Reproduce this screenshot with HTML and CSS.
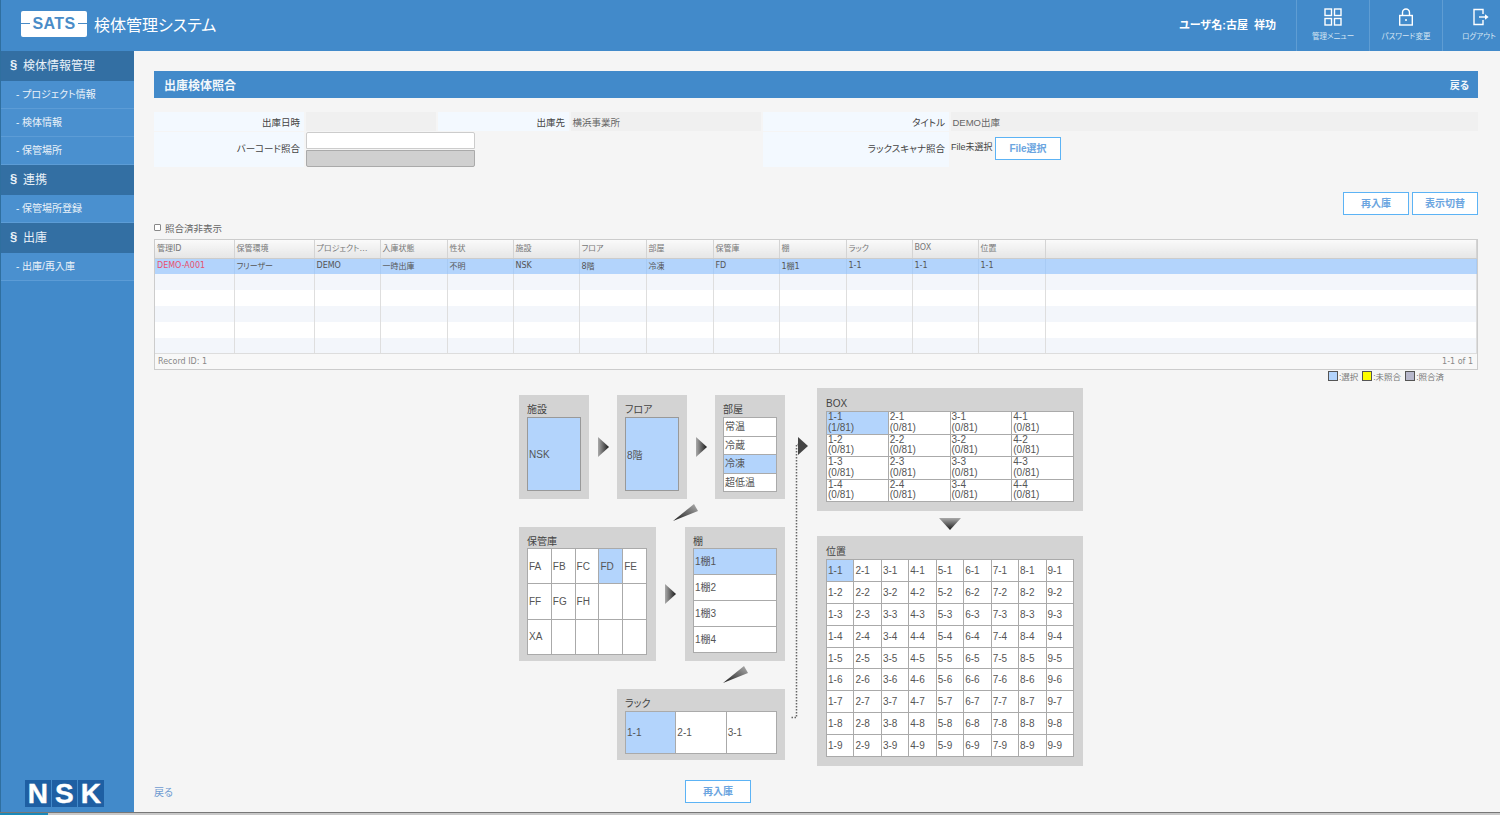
FILE: index.html
```html
<!DOCTYPE html>
<html lang="ja">
<head>
    <meta charset="UTF-8">
    <title>検体管理システム</title>
    <link rel="stylesheet" href="styles.css">
</head>
<body>
<header class="header">
    <div class="logo"><span class="logo-dash"></span><span class="logo-text">SATS</span><span class="logo-dash"></span></div>
    <div class="app-title">検体管理システム</div>
    <div class="user-name">ユーザ名:古屋&nbsp;&nbsp;祥功</div>
    <nav class="tools">
        <a class="tool">
            <svg width="18" height="18" viewBox="0 0 18 18" fill="none" stroke="#fff" stroke-width="1.4"><rect x="1" y="1" width="6.5" height="6.5"/><rect x="10.5" y="1" width="6.5" height="6.5"/><rect x="1" y="10.5" width="6.5" height="6.5"/><rect x="10.5" y="10.5" width="6.5" height="6.5"/></svg>
            <span>管理メニュー</span>
        </a>
        <a class="tool">
            <svg width="18" height="18" viewBox="0 0 18 18" fill="none" stroke="#fff" stroke-width="1.4"><rect x="2.7" y="7.5" width="12.6" height="9.5"/><path d="M5.5 7.5V4.5a3.5 3.5 0 0 1 7 0v3"/><circle cx="9" cy="12" r="1" fill="#fff" stroke="none"/></svg>
            <span>パスワード変更</span>
        </a>
        <a class="tool">
            <svg class="logout-icon" width="18" height="18" viewBox="0 0 18 18" fill="none" stroke="#fff" stroke-width="1.4"><path d="M11 6V1.5H2V16.5H11V12"/><path d="M7 9H13"/><path d="M13 6.2L16.6 9L13 11.8Z" fill="#fff" stroke="none"/></svg>
            <span>ログアウト</span>
        </a>
    </nav>
</header>

<div class="layout">
    <aside class="sidebar">
        <div class="side-head"><b>§</b>検体情報管理</div>
        <a class="side-item">- プロジェクト情報</a>
        <a class="side-item">- 検体情報</a>
        <a class="side-item">- 保管場所</a>
        <div class="side-head"><b>§</b>連携</div>
        <a class="side-item">- 保管場所登録</a>
        <div class="side-head"><b>§</b>出庫</div>
        <a class="side-item">- 出庫/再入庫</a>
        <div class="nsk"><span>N</span><span>S</span><span>K</span></div>
    </aside>

    <main class="main">
        <div class="title-bar"><span>出庫検体照合</span><a>戻る</a></div>

        <div class="info-form">
            <div class="f-label">出庫日時</div>
            <div class="f-value"></div>
            <div class="f-label">出庫先</div>
            <div class="f-value">横浜事業所</div>
            <div class="f-label">タイトル</div>
            <div class="f-value">DEMO出庫</div>

            <div class="f-label f-label-tall">バーコード照合</div>
            <div class="barcode">
                <div class="barcode-input"></div>
                <div class="barcode-btn"></div>
            </div>
            <div class="f-label f-label-tall">ラックスキャナ照合</div>
            <div class="f-file">File未選択<button class="btn btn-file">File選択</button></div>
        </div>

        <div class="actions">
            <button class="btn">再入庫</button>
            <button class="btn">表示切替</button>
        </div>

        <label class="hide-check"><span class="check-box"></span>照合済非表示</label>

        <div class="grid-wrap">
            <table class="data-grid">
                <colgroup>
                    <col class="c79"><col class="c80"><col class="c66"><col class="c67"><col class="c66"><col class="c66"><col class="c67"><col class="c67"><col class="c66"><col class="c67"><col class="c66"><col class="c66"><col class="c67"><col>
                </colgroup>
                <thead>
                    <tr><th>管理ID</th><th>保管環境</th><th>プロジェクト…</th><th>入庫状態</th><th>性状</th><th>施設</th><th>フロア</th><th>部屋</th><th>保管庫</th><th>棚</th><th>ラック</th><th>BOX</th><th>位置</th><th></th></tr>
                </thead>
                <tbody>
                    <tr class="row-selected"><td class="id-cell">DEMO-A001</td><td>フリーザー</td><td>DEMO</td><td>一時出庫</td><td>不明</td><td>NSK</td><td>8階</td><td>冷凍</td><td>FD</td><td>1棚1</td><td>1-1</td><td>1-1</td><td>1-1</td><td></td></tr>
                    <tr class="row-alt"><td></td><td></td><td></td><td></td><td></td><td></td><td></td><td></td><td></td><td></td><td></td><td></td><td></td><td></td></tr>
                    <tr><td></td><td></td><td></td><td></td><td></td><td></td><td></td><td></td><td></td><td></td><td></td><td></td><td></td><td></td></tr>
                    <tr class="row-alt"><td></td><td></td><td></td><td></td><td></td><td></td><td></td><td></td><td></td><td></td><td></td><td></td><td></td><td></td></tr>
                    <tr><td></td><td></td><td></td><td></td><td></td><td></td><td></td><td></td><td></td><td></td><td></td><td></td><td></td><td></td></tr>
                    <tr class="row-alt"><td></td><td></td><td></td><td></td><td></td><td></td><td></td><td></td><td></td><td></td><td></td><td></td><td></td><td></td></tr>
                </tbody>
            </table>
            <div class="grid-foot"><span>Record ID: 1</span><span>1-1 of 1</span></div>
        </div>

        <div class="legend">
            <i class="swatch sw-select"></i>:選択
            <i class="swatch sw-yet"></i>:未照合
            <i class="swatch sw-done"></i>:照合済
        </div>

        <div class="picker">
            <div class="picker-left">
                <div class="pick-row">
                    <section class="panel p-small">
                        <h4>施設</h4>
                        <div class="solid-box">NSK</div>
                    </section>
                    <svg class="arrow" width="28" height="22" viewBox="0 0 28 22"><defs><linearGradient id="ga"><stop offset="0" stop-color="#aaa"/><stop offset="1" stop-color="#1a1a1a"/></linearGradient></defs><path d="M9 1L20 11L9 21Z" fill="url(#ga)"/></svg>
                    <section class="panel p-small">
                        <h4>フロア</h4>
                        <div class="solid-box">8階</div>
                    </section>
                    <svg class="arrow" width="28" height="22" viewBox="0 0 28 22"><path d="M9 1L20 11L9 21Z" fill="url(#ga)"/></svg>
                    <section class="panel p-small">
                        <h4>部屋</h4>
                        <table class="cells room-cells">
                            <tr><td>常温</td></tr>
                            <tr><td>冷蔵</td></tr>
                            <tr><td class="on">冷凍</td></tr>
                            <tr><td>超低温</td></tr>
                        </table>
                    </section>
                </div>
                <div class="diag diag-a">
                    <svg width="26" height="18" viewBox="0 0 26 18"><defs><linearGradient id="gd" x1="1" y1="0" x2="0" y2="1"><stop offset="0" stop-color="#b0b0b0"/><stop offset="1" stop-color="#1a1a1a"/></linearGradient></defs><path d="M0 17L21 0L25 7Z" fill="url(#gd)"/></svg>
                </div>
                <div class="pick-row">
                    <section class="panel p-store">
                        <h4>保管庫</h4>
                        <table class="cells store-cells">
                            <tr><td>FA</td><td>FB</td><td>FC</td><td class="on">FD</td><td>FE</td></tr>
                            <tr><td>FF</td><td>FG</td><td>FH</td><td></td><td></td></tr>
                            <tr><td>XA</td><td></td><td></td><td></td><td></td></tr>
                        </table>
                    </section>
                    <svg class="arrow arrow-wide" width="29" height="22" viewBox="0 0 29 22"><path d="M9 1L20 11L9 21Z" fill="url(#ga)"/></svg>
                    <section class="panel p-shelf">
                        <h4>棚</h4>
                        <table class="cells shelf-cells">
                            <tr><td class="on">1棚1</td></tr>
                            <tr><td>1棚2</td></tr>
                            <tr><td>1棚3</td></tr>
                            <tr><td>1棚4</td></tr>
                        </table>
                    </section>
                </div>
                <div class="diag diag-b">
                    <svg width="26" height="18" viewBox="0 0 26 18"><path d="M0 17L21 0L25 7Z" fill="url(#gd)"/></svg>
                </div>
                <section class="panel p-rack">
                    <h4>ラック</h4>
                    <table class="cells rack-cells">
                        <tr><td class="on">1-1</td><td>2-1</td><td>3-1</td></tr>
                    </table>
                </section>
            </div>

            <svg class="connector" width="32" height="290" viewBox="0 0 32 290">
                <path d="M14 7.5H11.5V280.5H5" fill="none" stroke="#666" stroke-width="1.5" stroke-dasharray="1.5 1.5"/>
                <path d="M13 0L23 9L13 18Z" fill="#444"/>
            </svg>

            <div class="picker-right">
                <section class="panel p-wide">
                    <h4>BOX</h4>
                    <table class="cells box-cells">
                        <tr><td class="on">1-1<br>(1/81)</td><td>2-1<br>(0/81)</td><td>3-1<br>(0/81)</td><td>4-1<br>(0/81)</td></tr>
                        <tr><td>1-2<br>(0/81)</td><td>2-2<br>(0/81)</td><td>3-2<br>(0/81)</td><td>4-2<br>(0/81)</td></tr>
                        <tr><td>1-3<br>(0/81)</td><td>2-3<br>(0/81)</td><td>3-3<br>(0/81)</td><td>4-3<br>(0/81)</td></tr>
                        <tr><td>1-4<br>(0/81)</td><td>2-4<br>(0/81)</td><td>3-4<br>(0/81)</td><td>4-4<br>(0/81)</td></tr>
                    </table>
                </section>
                <svg class="arrow-down" width="22" height="25" viewBox="0 0 22 25"><defs><linearGradient id="gb" x2="0" y2="1"><stop offset="0" stop-color="#aaa"/><stop offset="1" stop-color="#1a1a1a"/></linearGradient></defs><path d="M0 7H22L11 19Z" fill="url(#gb)"/></svg>
                <section class="panel p-wide">
                    <h4>位置</h4>
                    <table class="cells pos-cells">
                        <tr><td class="on">1-1</td><td>2-1</td><td>3-1</td><td>4-1</td><td>5-1</td><td>6-1</td><td>7-1</td><td>8-1</td><td>9-1</td></tr>
                        <tr><td>1-2</td><td>2-2</td><td>3-2</td><td>4-2</td><td>5-2</td><td>6-2</td><td>7-2</td><td>8-2</td><td>9-2</td></tr>
                        <tr><td>1-3</td><td>2-3</td><td>3-3</td><td>4-3</td><td>5-3</td><td>6-3</td><td>7-3</td><td>8-3</td><td>9-3</td></tr>
                        <tr><td>1-4</td><td>2-4</td><td>3-4</td><td>4-4</td><td>5-4</td><td>6-4</td><td>7-4</td><td>8-4</td><td>9-4</td></tr>
                        <tr><td>1-5</td><td>2-5</td><td>3-5</td><td>4-5</td><td>5-5</td><td>6-5</td><td>7-5</td><td>8-5</td><td>9-5</td></tr>
                        <tr><td>1-6</td><td>2-6</td><td>3-6</td><td>4-6</td><td>5-6</td><td>6-6</td><td>7-6</td><td>8-6</td><td>9-6</td></tr>
                        <tr><td>1-7</td><td>2-7</td><td>3-7</td><td>4-7</td><td>5-7</td><td>6-7</td><td>7-7</td><td>8-7</td><td>9-7</td></tr>
                        <tr><td>1-8</td><td>2-8</td><td>3-8</td><td>4-8</td><td>5-8</td><td>6-8</td><td>7-8</td><td>8-8</td><td>9-8</td></tr>
                        <tr><td>1-9</td><td>2-9</td><td>3-9</td><td>4-9</td><td>5-9</td><td>6-9</td><td>7-9</td><td>8-9</td><td>9-9</td></tr>
                    </table>
                </section>
            </div>
        </div>

        <div class="page-foot">
            <a class="back-link">戻る</a>
            <button class="btn">再入庫</button>
        </div>
    </main>
</div>
<div class="bottom-strip"><span></span></div>
</body>
</html>
```

FILE: styles.css
```css
* {
    box-sizing: border-box;
}

html, body {
    height: 815px;
    margin: 0;
    overflow: hidden;
}

body {
    font-family: "Liberation Sans", "Noto Sans CJK JP", sans-serif;
    font-size: 10px;
    font-feature-settings: "palt";
    color: #555;
    background-color: #f5f5f5;
}

/* header */
.header {
    display: flex;
    align-items: center;
    height: 51px;
    padding: 0 0 4px 21px;
    background-color: #428aca;
    border-left: 1px solid #2f6f9f;
    color: #fff;
    overflow: hidden;
}

.logo {
    display: flex;
    align-items: center;
    justify-content: space-between;
    width: 66px;
    height: 26px;
    margin-left: -1px;
    background-color: #fff;
    border-radius: 2px;
}

.logo-text {
    font-size: 16px;
    font-weight: bold;
    letter-spacing: 0.4px;
    color: #4a8cc7;
}

.logo-dash {
    width: 9px;
    height: 1px;
    background-color: #4a8cc7;
}

.app-title {
    margin-left: 7px;
    font-size: 16px;
}

.user-name {
    margin-left: auto;
    margin-right: 20px;
    font-size: 11px;
    font-weight: bold;
}

.tools {
    display: flex;
    align-self: flex-start;
    margin-right: -15px;
}

.tool {
    display: flex;
    flex-direction: column;
    align-items: center;
    width: 73px;
    height: 51px;
    padding-top: 8px;
    border-left: 1px solid #5f9dd3;
    font-size: 7.5px;
    color: #d5e5f3;
}

.tool span {
    margin-top: 4px;
    white-space: nowrap;
}

.logout-icon {
    margin-left: 3px;
}

/* sidebar + main */
.layout {
    display: flex;
    height: 761px;
}

.sidebar {
    display: flex;
    flex-direction: column;
    width: 134px;
    background-color: #428aca;
    border-left: 1px solid #2f6f9f;
}

.side-head {
    display: flex;
    align-items: center;
    height: 30px;
    padding: 0 0 3px 9px;
    background-color: #336fa3;
    font-size: 12px;
    color: #e9f1f8;
}

.side-head b {
    width: 13px;
    font-size: 13px;
}

.side-item {
    display: flex;
    align-items: center;
    height: 28px;
    padding: 0 0 3px 15px;
    background-color: #4a90cf;
    border-bottom: 1px solid #5c9cd6;
    font-size: 10px;
    color: #eaf2f9;
}

.nsk {
    display: flex;
    gap: 1px;
    margin: auto 0 5px 24px;
}

.nsk span {
    width: 25.5px;
    height: 27px;
    background-color: #1e5fa3;
    font-family: "Liberation Sans", sans-serif;
    font-size: 28px;
    line-height: 27px;
    font-weight: bold;
    text-align: center;
    color: #fff;
    -webkit-text-stroke: 0.4px #fff;
}

.main {
    flex: 1;
    padding: 20px 22px 0 20px;
}

.title-bar {
    display: flex;
    align-items: center;
    justify-content: space-between;
    height: 27px;
    padding: 0 9px 0 10px;
    background-color: #428aca;
    font-size: 12px;
    font-weight: bold;
    color: #f2f7fb;
}

.title-bar a {
    font-size: 10px;
}

/* form */
.info-form {
    display: grid;
    grid-template-columns: 150px 130px 131px 190px 186px 1fr;
    grid-template-rows: 19px 35px;
    column-gap: 2px;
    row-gap: 1px;
    margin-top: 14px;
}

.f-label {
    display: flex;
    align-items: center;
    justify-content: flex-end;
    padding-right: 4px;
    background-color: #f3f9ff;
    font-size: 9.5px;
    color: #444;
}

.f-label-tall {
    padding-bottom: 3px;
}

.f-value {
    display: flex;
    align-items: center;
    padding-left: 1.5px;
    background-color: #f0f0f0;
    font-size: 9.5px;
    color: #666;
}

.barcode {
    grid-column: 2 / 5;
    width: 169px;
}

.barcode-input {
    height: 17px;
    background-color: #fff;
    border: 1px solid #ccc;
    border-radius: 2px 2px 0 0;
}

.barcode-btn {
    height: 17px;
    margin-top: 1px;
    background-color: #d0d0d0;
    border: 1px solid #aaa;
    border-radius: 0 0 2px 2px;
}

.f-file {
    display: flex;
    align-items: flex-start;
    width: 110px;
    padding-top: 5px;
    font-size: 9px;
    line-height: 21px;
    color: #444;
}

.btn {
    flex-shrink: 0;
    width: 66px;
    height: 23px;
    padding: 0 0 2px;
    background-color: #fff;
    border: 1px solid #5cb3f5;
    font-family: inherit;
    font-size: 10px;
    font-weight: bold;
    font-feature-settings: "palt";
    color: #6ba5e0;
}

.btn-file {
    margin-left: auto;
}

.actions {
    display: flex;
    justify-content: flex-end;
    gap: 3px;
    margin-top: 25px;
}

.hide-check {
    display: flex;
    align-items: center;
    height: 12px;
    margin-top: 7px;
    padding-bottom: 1px;
    font-size: 9.5px;
    color: #666;
}

.check-box {
    width: 7px;
    height: 7px;
    margin-right: 4px;
    background-color: #fff;
    border: 1px solid #888;
    border-radius: 1px;
}

/* data grid */
.grid-wrap {
    margin-top: 5px;
    background-color: #f8f8f8;
    border: 1px solid #ccc;
}

.data-grid {
    width: 100%;
    border-collapse: collapse;
    table-layout: fixed;
    font-family: "DejaVu Sans", "Noto Sans CJK JP", sans-serif;
    font-size: 8px;
}

.c79 { width: 79px; }
.c80 { width: 80px; }
.c66 { width: 66px; }
.c67 { width: 67px; }

.data-grid th {
    height: 18px;
    padding: 0 1px 2px 2px;
    background: linear-gradient(#fafafa, #e6e6e6);
    border-right: 1px solid #d4d4d4;
    border-bottom: 1px solid #ccc;
    font-weight: normal;
    text-align: left;
    color: #777;
    overflow: hidden;
    white-space: nowrap;
}

.data-grid td {
    height: 16px;
    padding: 0 1px 2px 2px;
    background-color: #fff;
    border-right: 1px solid #dedede;
    color: #555;
    white-space: nowrap;
}

.data-grid tr:last-child td {
    height: 15px;
}

.data-grid .row-alt td {
    background-color: #f3f6fb;
}

.data-grid .row-selected td {
    background-color: #b3d4fc;
    border-right-color: #a8cbf5;
}

.data-grid .id-cell {
    color: #e8506e;
}

.grid-foot {
    display: flex;
    align-items: center;
    justify-content: space-between;
    height: 16px;
    padding: 0 4px 1px 3px;
    border-top: 1px solid #ddd;
    font-family: "DejaVu Sans", sans-serif;
    font-size: 8px;
    color: #888;
}

.legend {
    display: flex;
    align-items: center;
    justify-content: flex-end;
    height: 13px;
    padding: 0 34px 2px 0;
    font-size: 8.5px;
    color: #777;
}

.swatch {
    width: 10px;
    height: 10px;
    margin: 0 1px 0 4px;
    border: 1px solid #555;
}

.sw-select { background-color: #b3d4fc; }
.sw-yet { background-color: #ffff00; }
.sw-done { background-color: #b8b8cc; }

/* picker panels */
.picker {
    display: flex;
    align-items: flex-start;
    margin: 5px 0 0 365px;
}

.picker-left {
    display: flex;
    flex-direction: column;
    width: 266px;
    margin-top: 7px;
}

.pick-row {
    display: flex;
    align-items: center;
}

.panel {
    padding: 0 8px;
    background-color: #d3d3d3;
}

.panel h4 {
    height: 22px;
    margin: 0;
    padding-top: 9px;
    font-size: 10px;
    line-height: 11px;
    font-weight: normal;
    color: #444;
}

.p-small {
    width: 70px;
    height: 104px;
}

.solid-box {
    display: flex;
    align-items: center;
    height: 74px;
    padding-left: 1px;
    background-color: #b3d4fc;
    border: 1px solid #999;
}

.cells {
    width: 100%;
    border-collapse: collapse;
    table-layout: fixed;
    background-color: #fff;
    border: 1px solid #999;
}

.cells td {
    padding: 0 0 0 1px;
    border: 1px solid #aaa;
    line-height: 11px;
    color: #555;
}

.cells td.on {
    background-color: #b3d4fc;
}

.room-cells td {
    height: 18.5px;
}

.p-store {
    width: 137px;
    height: 134px;
    padding-right: 9px;
}

.p-store h4,
.p-shelf h4 {
    height: 21px;
    padding-top: 9px;
}

.store-cells td {
    height: 35.3px;
}

.p-shelf {
    width: 100px;
    height: 134px;
}

.shelf-cells td {
    height: 26px;
    padding-bottom: 1px;
}

.arrow {
    flex-shrink: 0;
}

.diag {
    display: flex;
    justify-content: flex-end;
    align-items: center;
    height: 28px;
}

.diag-a { padding-right: 86px; }
.diag-b { padding-right: 36px; }

.p-rack {
    width: 168px;
    height: 71px;
    margin-left: 98px;
}

.rack-cells td {
    height: 42px;
}

.connector {
    flex-shrink: 0;
    margin-top: 49px;
}

.picker-right {
    display: flex;
    flex-direction: column;
    align-items: center;
    width: 266px;
}

.p-wide {
    width: 266px;
    padding: 0 9px;
}

.p-wide h4 {
    height: 23px;
    padding-top: 10px;
}

.box-cells {
    margin-bottom: 9px;
}

.box-cells td {
    height: 22.5px;
    font-size: 10px;
    line-height: 10.5px;
}

.pos-cells {
    margin-bottom: 9px;
}

.pos-cells td {
    height: 21.9px;
}

.page-foot {
    display: grid;
    grid-template-columns: 531px auto;
    justify-content: start;
    align-items: center;
    margin-top: 14px;
}

.back-link {
    padding-bottom: 1px;
    color: #6f9bd1;
}

.bottom-strip {
    height: 3px;
    background-color: #c8c8c8;
    border-top: 1px solid #777;
}

.bottom-strip span {
    display: block;
    width: 48px;
    height: 2px;
    background-color: #1a88b8;
}
```
